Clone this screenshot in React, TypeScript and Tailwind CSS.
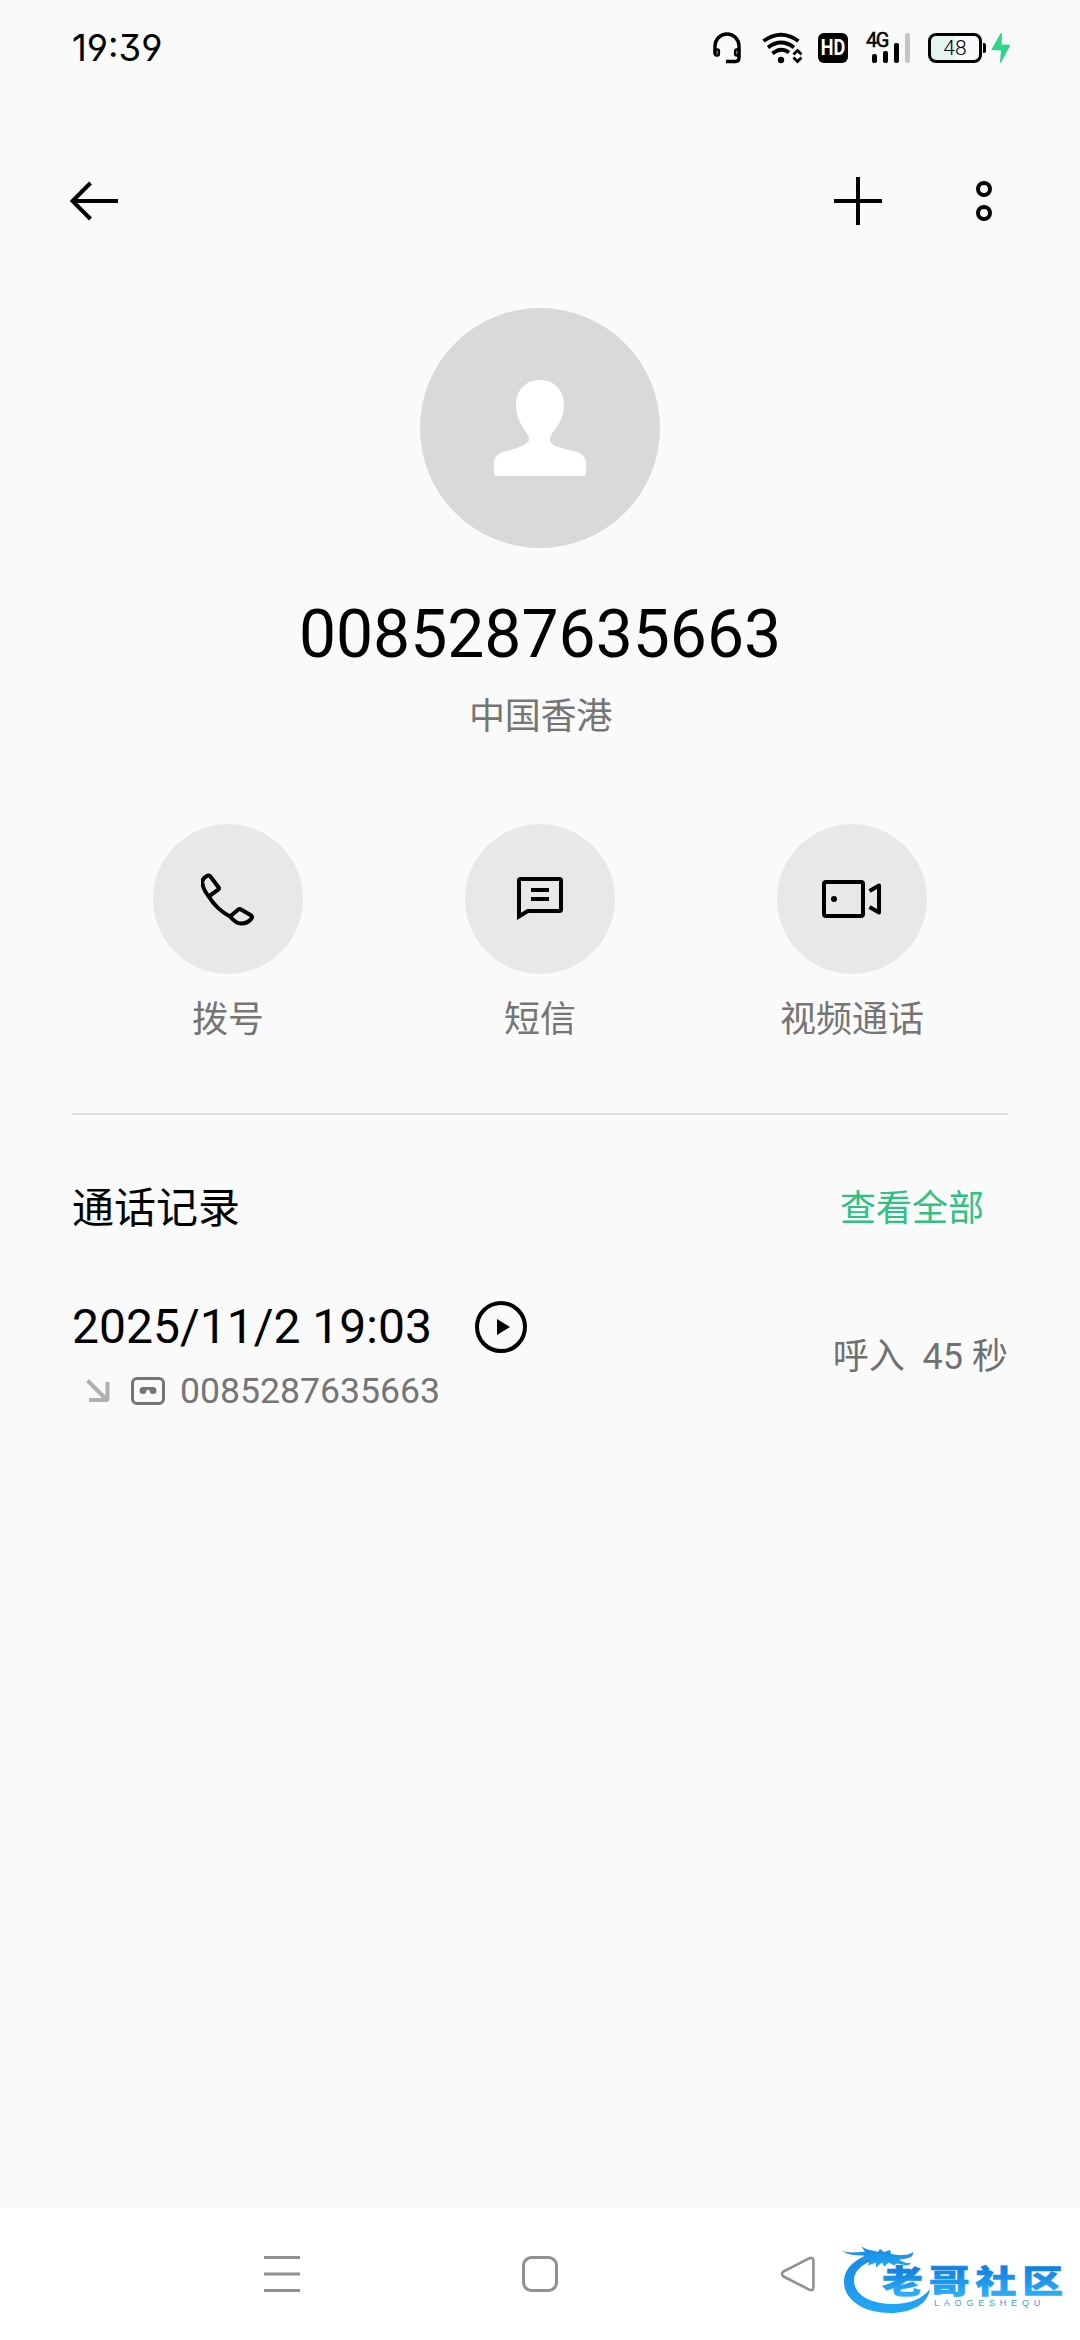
import type { ReactNode } from 'react';

const PHONE_NUMBER = '0085287635663';

function StatusBar() {
  return (
    <div className="flex h-24 items-center pl-[72px] pr-[69px] text-black">
      <span className="font-['Inter',sans-serif] text-[36.5px] leading-none [font-feature-settings:'ss01','cv09']">
        19:39
      </span>
      <div className="ml-auto flex items-center">
        {/* Headset */}
        <svg className="h-[32px] w-[30px]" viewBox="0 0 30 32" fill="none" stroke="currentColor" strokeWidth="3.4">
          <path d="M3 22V14a12 12 0 0 1 24 0v12q0 3.500-3.500 3.500H14" />
          <path d="M3 17.500h2.500a1.300 1.300 0 0 1 1.300 1.300v3.400a1.300 1.300 0 0 1-1.300 1.300h-1.200a1.300 1.300 0 0 1-1.300-1.300zM27 17.500h-2.500a1.300 1.300 0 0 0-1.300 1.300v3.400a1.300 1.300 0 0 0 1.300 1.300h2.500z" strokeWidth="2.600" />
        </svg>
        {/* Wi-Fi */}
        <svg className="ml-[20px] h-[32px] w-[40px]" viewBox="0 0 40 32" fill="none" stroke="currentColor" strokeWidth="3.8">
          <path d="M1.500 9Q19 -3.500 36.500 9" />
          <path d="M6 15.500Q19 5.500 32 15.500" />
          <path d="M10.500 21.500Q19 14.500 27 20.500" />
          <circle cx="19" cy="28" r="3.200" fill="currentColor" stroke="none" />
          <path d="M31.500 22.500l4-4 4 4M31.500 25.500l4 4 4-4" strokeWidth="2.800" />
        </svg>
        <span className="ml-[16px] flex h-[30px] w-[30px] items-center justify-center rounded-[6px] bg-black text-white">
          <span className="scale-x-[0.82] font-['Roboto',sans-serif] text-[22px] font-bold leading-none">HD</span>
        </span>
        {/* Mobile signal */}
        <div className="relative ml-[18px] h-[30px] w-[45px]">
          <span className="absolute -top-[3px] left-0 font-['Roboto',sans-serif] text-[20px] leading-none tracking-[-1.5px] [-webkit-text-stroke:0.5px_black]">
            4G
          </span>
          <div className="flex h-full items-end gap-[6px] pl-[6px]">
            <i className="h-[9px] w-[5px] rounded-[2px] bg-black" />
            <i className="h-[12px] w-[5px] rounded-[2px] bg-black" />
            <i className="h-[20px] w-[5px] rounded-[2px] bg-black" />
            <i className="h-[30px] w-[5px] rounded-[2px] bg-[#c4c4c4]" />
          </div>
        </div>
        {/* Battery */}
        <div className="ml-[17px] flex h-[30px] w-[54px] items-center justify-center rounded-[8px] border-[3px] border-black bg-linear-to-r from-[#e2f5ee] from-50% to-[#fafafa] to-50% font-['Roboto',sans-serif] text-[21px] font-light leading-none">
          48
        </div>
        <i className="ml-px h-[10px] w-[3px] rounded-r-[2px] bg-black" />
        <svg className="ml-[5px] h-[32px] w-[20px]" viewBox="0 0 20 32" fill="#2ed589">
          <path d="M9.500 1.500L.6 17.200q-.3.800.6.900L10 18.500 9 30q.3 1.500 1.300.2L19 13.800q.3-1-.6-1.100L10.600 12.500 11 2q-.5-1.500-1.500-.5z" />
        </svg>
      </div>
    </div>
  );
}

function Toolbar() {
  return (
    <div className="flex h-[210px] items-center pl-[70px] pr-[88px] text-black">
      <svg className="h-12 w-12" viewBox="0 0 48 48" fill="none" stroke="currentColor" strokeWidth="4">
        <path d="M48 24H3M20.500 6L2.500 24l18 18" />
      </svg>
      <svg className="ml-auto h-12 w-12" viewBox="0 0 48 48" stroke="currentColor" strokeWidth="4">
        <path d="M24 0v48M0 24h48" />
      </svg>
      <svg className="ml-[94px] h-10 w-4" viewBox="0 0 16 40" fill="none" stroke="currentColor" strokeWidth="4">
        <circle cx="8" cy="8" r="6" />
        <circle cx="8" cy="32" r="6" />
      </svg>
    </div>
  );
}

function Action({ label, children }: { label: string; children: ReactNode }) {
  return (
    <div className="flex flex-1 flex-col items-center">
      <div className="flex h-[150px] w-[150px] items-center justify-center rounded-full bg-[#e8e8e8] text-black">
        {children}
      </div>
      <span className="mt-[19px] text-[36px] leading-[54px] text-[#757575]">{label}</span>
    </div>
  );
}

function NavBar() {
  return (
    <div className="flex h-[132px] items-center bg-white pl-[264px] text-[#919191]">
      <svg className="h-9 w-9" viewBox="0 0 36 36" stroke="currentColor" strokeWidth="3">
        <path d="M0 1.500h36M0 18h36M0 34.500h36" />
      </svg>
      <svg className="ml-[222px] h-9 w-9" viewBox="0 0 36 36" fill="none" stroke="currentColor" strokeWidth="3">
        <rect x="1.500" y="1.500" width="33" height="33" rx="8" />
      </svg>
      <svg className="ml-[222px] h-9 w-9" viewBox="0 0 36 36" fill="none" stroke="currentColor" strokeWidth="2.600" strokeLinejoin="round">
        <path d="M3.500 15.500L29.500 2.200Q33.200 1 33.400 4.500v27Q33.200 35 29.500 33.800L3.500 20.500q-3-2.500 0-5z" />
      </svg>
      <Logo />
    </div>
  );
}

function Logo() {
  return (
    <svg className="ml-[24px] h-[84px] w-[230px]" viewBox="0 0 230 84">
      <defs>
        <linearGradient id="ring" x1="0" y1="0" x2="0" y2="1">
          <stop offset="0" stopColor="#1a86e2" />
          <stop offset="1" stopColor="#22a8f8" />
        </linearGradient>
        <linearGradient id="word" x1="0" y1="0" x2="0" y2="1">
          <stop offset="0.250" stopColor="#1280e0" />
          <stop offset="0.900" stopColor="#2fb2fb" />
        </linearGradient>
      </defs>
      <g fill="url(#ring)">
        <path d="M32 22C16 26 4 36 4 50c0 18 20 31 46 31 22 0 38-9 40-24-8 10-20 15-37 15-23 0-39-9-39-24 0-9 8-16 20-20z" />
        <path d="M2 18.500c6 3 13 1.500 20 1.500l3-.5-4-5.500c5 4 9 4 14 5l3 1 2-3 4 3 6-2 1 4 7 1c7 0 11 0 15-3 1 5-5 7-11 7l-3 1 6 2.500c2 1 4 1 6 0-1 3-5 4-9 2l-5-1-3 2-5-3-5 4-2-4-6 5v-5l-8 3 2-6-10 2 4-6C14 23.500 6 22.500 2 18.500z" />
      </g>
      <text
        transform="scale(1.280 1)"
        x="32.800"
        y="61.500"
        fontSize="32"
        fontWeight="900"
        letterSpacing="4.500"
        fontFamily="'Noto Sans CJK SC', sans-serif"
        fill="url(#word)"
        stroke="url(#word)"
        strokeWidth="0.600"
      >
        老哥社区
      </text>
      <text x="94" y="74" fontSize="9" letterSpacing="4.800" fontFamily="'Liberation Sans', sans-serif" fill="#4597dd">
        LAOGESHEQU
      </text>
    </svg>
  );
}

export default function App() {
  return (
    <div className="flex h-[2340px] w-[1080px] flex-col overflow-hidden bg-[#fafafa] font-['Roboto','Noto_Sans_CJK_SC',sans-serif]">
      <StatusBar />
      <Toolbar />

      <section className="flex flex-col items-center pt-[2px]">
        <div className="flex h-[240px] w-[240px] items-center justify-center rounded-full bg-[#d9d9d9]">
          <svg className="h-24 w-[92px]" viewBox="0 0 92 96" fill="#fff">
            <path d="M46 0c14 0 24 10 24 25 0 12-4.500 18-9.500 25-3 4-4.500 6.500-4.500 9 0 3 2 5.500 7 7.500 6 2.300 12 3.300 18 5 8 2 11 6 11 13v9q0 2.500-2.500 2.500h-87q-2.500 0-2.500-2.500v-9c0-7 3-11 11-13 6-1.700 12-3.200 17-5.500 5-2.300 7-4 7-7 0-2.500-2-5-4.500-9C26.500 43 22 37 22 25 22 10 32 0 46 0z" />
          </svg>
        </div>
        <h1 className="mt-[48px] text-[66px] leading-[78px] text-black">{PHONE_NUMBER}</h1>
        <p className="mt-[16px] pl-px text-[36px] leading-[54px] tracking-[-0.2px] text-[#757575]">中国香港</p>
      </section>

      <section className="mt-[80px] flex px-[72px]">
        <Action label="拨号">
          <svg className="h-[54px] w-[54px]" viewBox="0 0 54 54" fill="none" stroke="currentColor" strokeWidth="4" strokeLinejoin="round">
            <path d="M7.700 24.500l9.500-6.800q1.300-1 .3-2.500L9.800 5Q8 2.300 5.500 4.200 1 6.500 1.300 11C2 16.500 4.500 20.500 7.700 24.500c5.300 8.500 12.800 15.500 21.300 20l8-6.700q1.300-1.300 3-.3l9.500 5.500q2.300 1.500 1 3.500C48 50 43.500 51.500 40 51.500c-4 0-8-3.500-11-7" />
          </svg>
        </Action>
        <Action label="短信">
          <svg className="h-[54px] w-[54px]" viewBox="0 0 54 54" fill="none" stroke="currentColor" strokeWidth="4">
            <path d="M6 44.500V8.500Q6 7 7.500 7h39Q48 7 48 8.500v29q0 1.500-1.500 1.500H14.800z" />
            <path d="M18 18h18M18 27h18" />
          </svg>
        </Action>
        <Action label="视频通话">
          <svg className="h-[54px] w-[60px]" viewBox="0 0 60 54" fill="none" stroke="currentColor" strokeWidth="4">
            <rect x="2" y="10" width="39" height="34" rx="2" />
            <circle cx="12" cy="27" r="3" fill="currentColor" stroke="none" />
            <path d="M47.500 19L57 13.500v27L47.500 35" strokeLinejoin="round" />
          </svg>
        </Action>
      </section>

      <section className="mx-[72px] mt-[66px] border-t-2 border-[#e0e0e0]">
        <div className="mt-[62px] flex items-center justify-between pr-[24px]">
          <h2 className="text-[42px] leading-[64px] text-black">通话记录</h2>
          <span className="text-[36px] leading-[54px] text-[#2fc184]">查看全部</span>
        </div>

        <div className="mt-[57px] flex items-center">
          <div className="flex flex-col">
            <div className="flex items-center">
              <span className="text-[48px] leading-[58px] text-black">2025/11/2 19:03</span>
              <svg className="ml-[43px] h-[52px] w-[52px]" viewBox="0 0 52 52">
                <circle cx="26" cy="26" r="24" fill="none" stroke="#000" strokeWidth="4" />
                <path d="M22 18l13 8-13 8z" fill="#000" />
              </svg>
            </div>
            <div className="mt-[14px] flex items-center text-[#757575]">
              <svg className="ml-[14px] h-6 w-6" viewBox="0 0 24 24" fill="none" stroke="#b0b0b0" strokeWidth="4">
                <path d="M1.500 1.500L21 21M3 21h17q1.500 0 1.500-1.500V3" />
              </svg>
              <svg className="ml-[21px] h-7 w-[34px]" viewBox="0 0 34 28" fill="none" stroke="currentColor" strokeWidth="3">
                <rect x="1.500" y="1.500" width="31" height="25" rx="4.500" />
                <path d="M12 11.500h10" />
                <circle cx="12" cy="13.500" r="3.500" fill="currentColor" stroke="none" />
                <circle cx="22" cy="13.500" r="3.500" fill="currentColor" stroke="none" />
              </svg>
              <span className="ml-[15px] text-[35.6px] leading-[42px]">{PHONE_NUMBER}</span>
            </div>
          </div>
          <span className="ml-auto mt-[4px] whitespace-pre text-[36px] leading-[54px] text-[#707070]">呼入  45 秒</span>
        </div>
      </section>

      <div className="mt-auto">
        <NavBar />
      </div>
    </div>
  );
}
